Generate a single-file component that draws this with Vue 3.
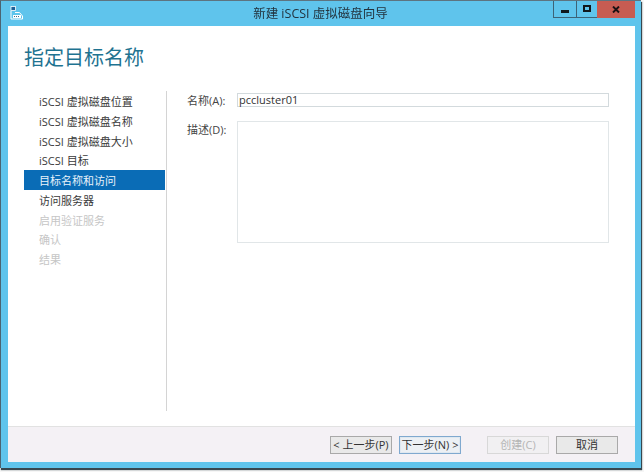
<script setup>
const steps = [
  { label: 'iSCSI 虚拟磁盘位置' },
  { label: 'iSCSI 虚拟磁盘名称' },
  { label: 'iSCSI 虚拟磁盘大小' },
  { label: 'iSCSI 目标' },
  { label: '目标名称和访问', active: true },
  { label: '访问服务器' },
  { label: '启用验证服务', disabled: true },
  { label: '确认', disabled: true },
  { label: '结果', disabled: true },
]
</script>

<template>
  <div class="page">
    <div class="window">
      <header class="titlebar">
        <div class="app-icon">
          <svg width="14" height="14" viewBox="0 0 14 14" fill="none">
            <rect x="1" y="0.5" width="4.5" height="4" fill="#1c5f96" stroke="#fff" stroke-width="0.8" />
            <path d="M1 5v8h11.5v-3L9.5 6.5H5" stroke="#fff" stroke-width="1" fill="#5ec4ec" />
            <rect x="3" y="9" width="8" height="3" fill="#fff" />
            <path d="M4 10.5h6" stroke="#4a6d85" stroke-width="1" stroke-dasharray="1 1" />
          </svg>
        </div>
        <div class="title">新建 iSCSI 虚拟磁盘向导</div>
        <div class="controls">
          <button class="ctl ctl-min"><span class="min-glyph"></span></button>
          <button class="ctl ctl-max"><span class="max-glyph"></span></button>
          <button class="ctl ctl-close">
            <svg width="8" height="7" viewBox="0 0 8 7"><path d="M1 .5l6 6M7 .5l-6 6" stroke="#1a1113" stroke-width="1.9" /></svg>
          </button>
        </div>
      </header>

      <main class="client">
        <div class="content">
          <h1 class="heading">指定目标名称</h1>
          <div class="body">
            <nav class="steps">
              <div
                v-for="s in steps"
                :key="s.label"
                class="step"
                :class="{ active: s.active, disabled: s.disabled }"
              >{{ s.label }}</div>
            </nav>
            <section class="form">
              <div class="row row-name">
                <label class="lbl">名称(A):</label>
                <div class="input">pccluster01</div>
              </div>
              <div class="row">
                <label class="lbl lbl-desc">描述(D):</label>
                <div class="textarea"></div>
              </div>
            </section>
          </div>
        </div>
        <footer class="footer">
          <button class="btn">&lt; 上一步(P)</button>
          <button class="btn btn-default">下一步(N) &gt;</button>
          <button class="btn btn-disabled btn-gap">创建(C)</button>
          <button class="btn">取消</button>
        </footer>
      </main>
    </div>
  </div>
</template>

<style>
html, body { margin: 0; background: #fff; }
</style>

<style scoped>
.page {
  width: 644px;
  height: 472px;
  overflow: hidden;
  background: #f6f6f6;
  font-family: "Open Sans", "Noto Sans CJK SC", sans-serif;
  font-size: 11px;
  color: #333;
  box-sizing: border-box;
  padding: 0 3px 4px 0;
}
.window {
  width: 100%;
  height: 100%;
  box-sizing: border-box;
  display: flex;
  flex-direction: column;
  background: #5fc4ec;
  border-top: 1px solid #5d7480;
  border-left: 1px solid #4b6472;
  box-shadow: 1px 2px 1px #37474f;
  padding: 0 6px 6px 7px;
  filter: blur(0.3px);
}
.titlebar {
  height: 25px;
  flex: none;
  display: grid;
  grid-template-columns: 1fr auto 1fr;
  align-items: start;
}
.app-icon { padding: 5px 0 0 2px; height: 14px; }
.title {
  padding-top: 5px;
  font-size: 12.5px;
  line-height: 16px;
  color: #23343f;
  transform: translateX(-1px);
}
.controls { display: flex; justify-self: end; height: 17px; }
.ctl {
  border: 0;
  padding: 0;
  margin: 0;
  display: flex;
  align-items: center;
  justify-content: center;
  background: transparent;
  border-bottom: 1px solid #3d6377;
  border-left: 1px solid #3d6377;
  box-sizing: content-box;
}
.ctl-min { width: 22px; height: 16px; }
.ctl-max { width: 20px; height: 16px; }
.ctl-close { width: 38px; height: 17px; background: #c75c52; border-bottom: 0; border-left: 0; }
.min-glyph { width: 8px; height: 3px; background: #10181d; margin-top: 5px; }
.max-glyph { width: 4px; height: 3px; border: 2px solid #10181d; margin-top: -1px; }
.client {
  flex: 1;
  min-height: 0;
  display: flex;
  flex-direction: column;
  background: #fff;
}
.content {
  flex: 1;
  min-height: 0;
  display: flex;
  flex-direction: column;
  border-bottom: 1px solid #e2e2e2;
}
.heading {
  margin: 0;
  padding: 18px 0 0 16px;
  height: 48px;
  box-sizing: border-box;
  font-size: 20px;
  line-height: 28px;
  font-weight: 400;
  color: #1f7391;
  flex: none;
}
.body { flex: 1; display: flex; min-height: 0; padding: 17px 0 15px 16px; }
.steps {
  width: 142px;
  flex: none;
  border-right: 1px solid #d4d4d4;
  box-sizing: content-box;
}
.step {
  height: 19.75px;
  line-height: 21.75px;
  padding-left: 15px;
  color: #3a3a3a;
  white-space: nowrap;
}
.step.active { background: #0a6cb6; color: #e8f2fa; margin-right: 1px; }
.step.disabled { color: #c6c6c6; }
.form { flex: 1; display: flex; flex-direction: column; gap: 12px; padding: 2px 26px 0 20px; }
.row { display: flex; align-items: flex-start; }
.lbl { width: 50px; flex: none; line-height: 16px; color: #444; }
.lbl-desc { padding-top: 1px; }
.input {
  flex: 1;
  height: 12px;
  border: 1px solid #d3dadd;
  padding-left: 1px;
  line-height: 12px;
  font-size: 11px;
  color: #333;
}
.textarea {
  flex: 1;
  height: 120px;
  border: 1px solid #e1e6e8;
}
.footer {
  height: 35px;
  flex: none;
  box-sizing: border-box;
  background: #f4f1f5;
  display: flex;
  align-items: flex-start;
  padding: 9px 17px 0 0;
  justify-content: flex-end;
  gap: 7px;
}
.btn {
  width: 62px;
  height: 18px;
  padding: 0;
  box-sizing: border-box;
  border: 1px solid #a9a9a9;
  background: #e9e9e9;
  font: inherit;
  line-height: 14px;
  color: #333;
}
.btn-default { border-color: #7fa9cf; background: #ecf0f4; box-shadow: inset 0 0 0 1px #dfe8f0; }
.btn-disabled { border-color: #d8d8d8; background: #f1f0f2; color: #b5b5b5; }
.btn-gap { margin-left: 19px; }
</style>
